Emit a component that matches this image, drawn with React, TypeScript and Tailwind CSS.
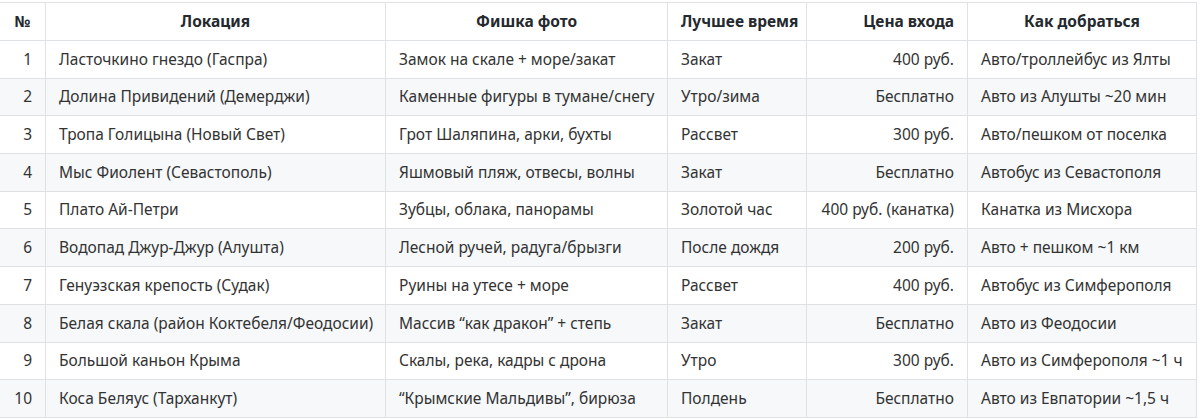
import React from "react";

const rows = [
  ["1", "Ласточкино гнездо (Гаспра)", "Замок на скале + море/закат", "Закат", "400 руб.", "Авто/троллейбус из Ялты"],
  ["2", "Долина Привидений (Демерджи)", "Каменные фигуры в тумане/снегу", "Утро/зима", "Бесплатно", "Авто из Алушты ~20 мин"],
  ["3", "Тропа Голицына (Новый Свет)", "Грот Шаляпина, арки, бухты", "Рассвет", "300 руб.", "Авто/пешком от поселка"],
  ["4", "Мыс Фиолент (Севастополь)", "Яшмовый пляж, отвесы, волны", "Закат", "Бесплатно", "Автобус из Севастополя"],
  ["5", "Плато Ай-Петри", "Зубцы, облака, панорамы", "Золотой час", "400 руб. (канатка)", "Канатка из Мисхора"],
  ["6", "Водопад Джур-Джур (Алушта)", "Лесной ручей, радуга/брызги", "После дождя", "200 руб.", "Авто + пешком ~1 км"],
  ["7", "Генуэзская крепость (Судак)", "Руины на утесе + море", "Рассвет", "400 руб.", "Автобус из Симферополя"],
  ["8", "Белая скала (район Коктебеля/Феодосии)", "Массив “как дракон” + степь", "Закат", "Бесплатно", "Авто из Феодосии"],
  ["9", "Большой каньон Крыма", "Скалы, река, кадры с дрона", "Утро", "300 руб.", "Авто из Симферополя ~1 ч"],
  ["10", "Коса Беляус (Тарханкут)", "“Крымские Мальдивы”, бирюза", "Полдень", "Бесплатно", "Авто из Евпатории ~1,5 ч"],
];

const cell = "border border-[#dfe2e5] px-[13px] py-0 whitespace-nowrap";

export default function App() {
  return (
    <div className="bg-white min-h-screen pt-[2px] overflow-hidden font-['Noto_Sans',sans-serif] text-[15.5px] text-[#333]">
      <table className="table-fixed border-collapse ml-[-1px] w-[1197px]">
        <colgroup>
          <col className="w-[46px]" />
          <col className="w-[340px]" />
          <col className="w-[282px]" />
          <col className="w-[139px]" />
          <col className="w-[161px]" />
          <col className="w-[229px]" />
        </colgroup>
        <thead>
          <tr className="h-[38px] bg-white font-semibold text-[#24292e]">
            <th className={cell + " text-center"}>№</th>
            <th className={cell + " text-center"}>Локация</th>
            <th className={cell + " text-center"}>Фишка фото</th>
            <th className={cell + " text-left"}>Лучшее время</th>
            <th className={cell + " text-right"}>Цена входа</th>
            <th className={cell + " text-center"}>Как добраться</th>
          </tr>
        </thead>
        <tbody>
          {rows.map((r, i) => (
            <tr key={r[0]} className={"h-[37.7px] " + (i % 2 === 1 ? "bg-[#f6f8fa]" : "bg-white")}>
              <td className={cell + " text-right"}>{r[0]}</td>
              <td className={cell}>{r[1]}</td>
              <td className={cell}>{r[2]}</td>
              <td className={cell}>{r[3]}</td>
              <td className={cell + " text-right"}>{r[4]}</td>
              <td className={cell}>{r[5]}</td>
            </tr>
          ))}
        </tbody>
      </table>
    </div>
  );
}
